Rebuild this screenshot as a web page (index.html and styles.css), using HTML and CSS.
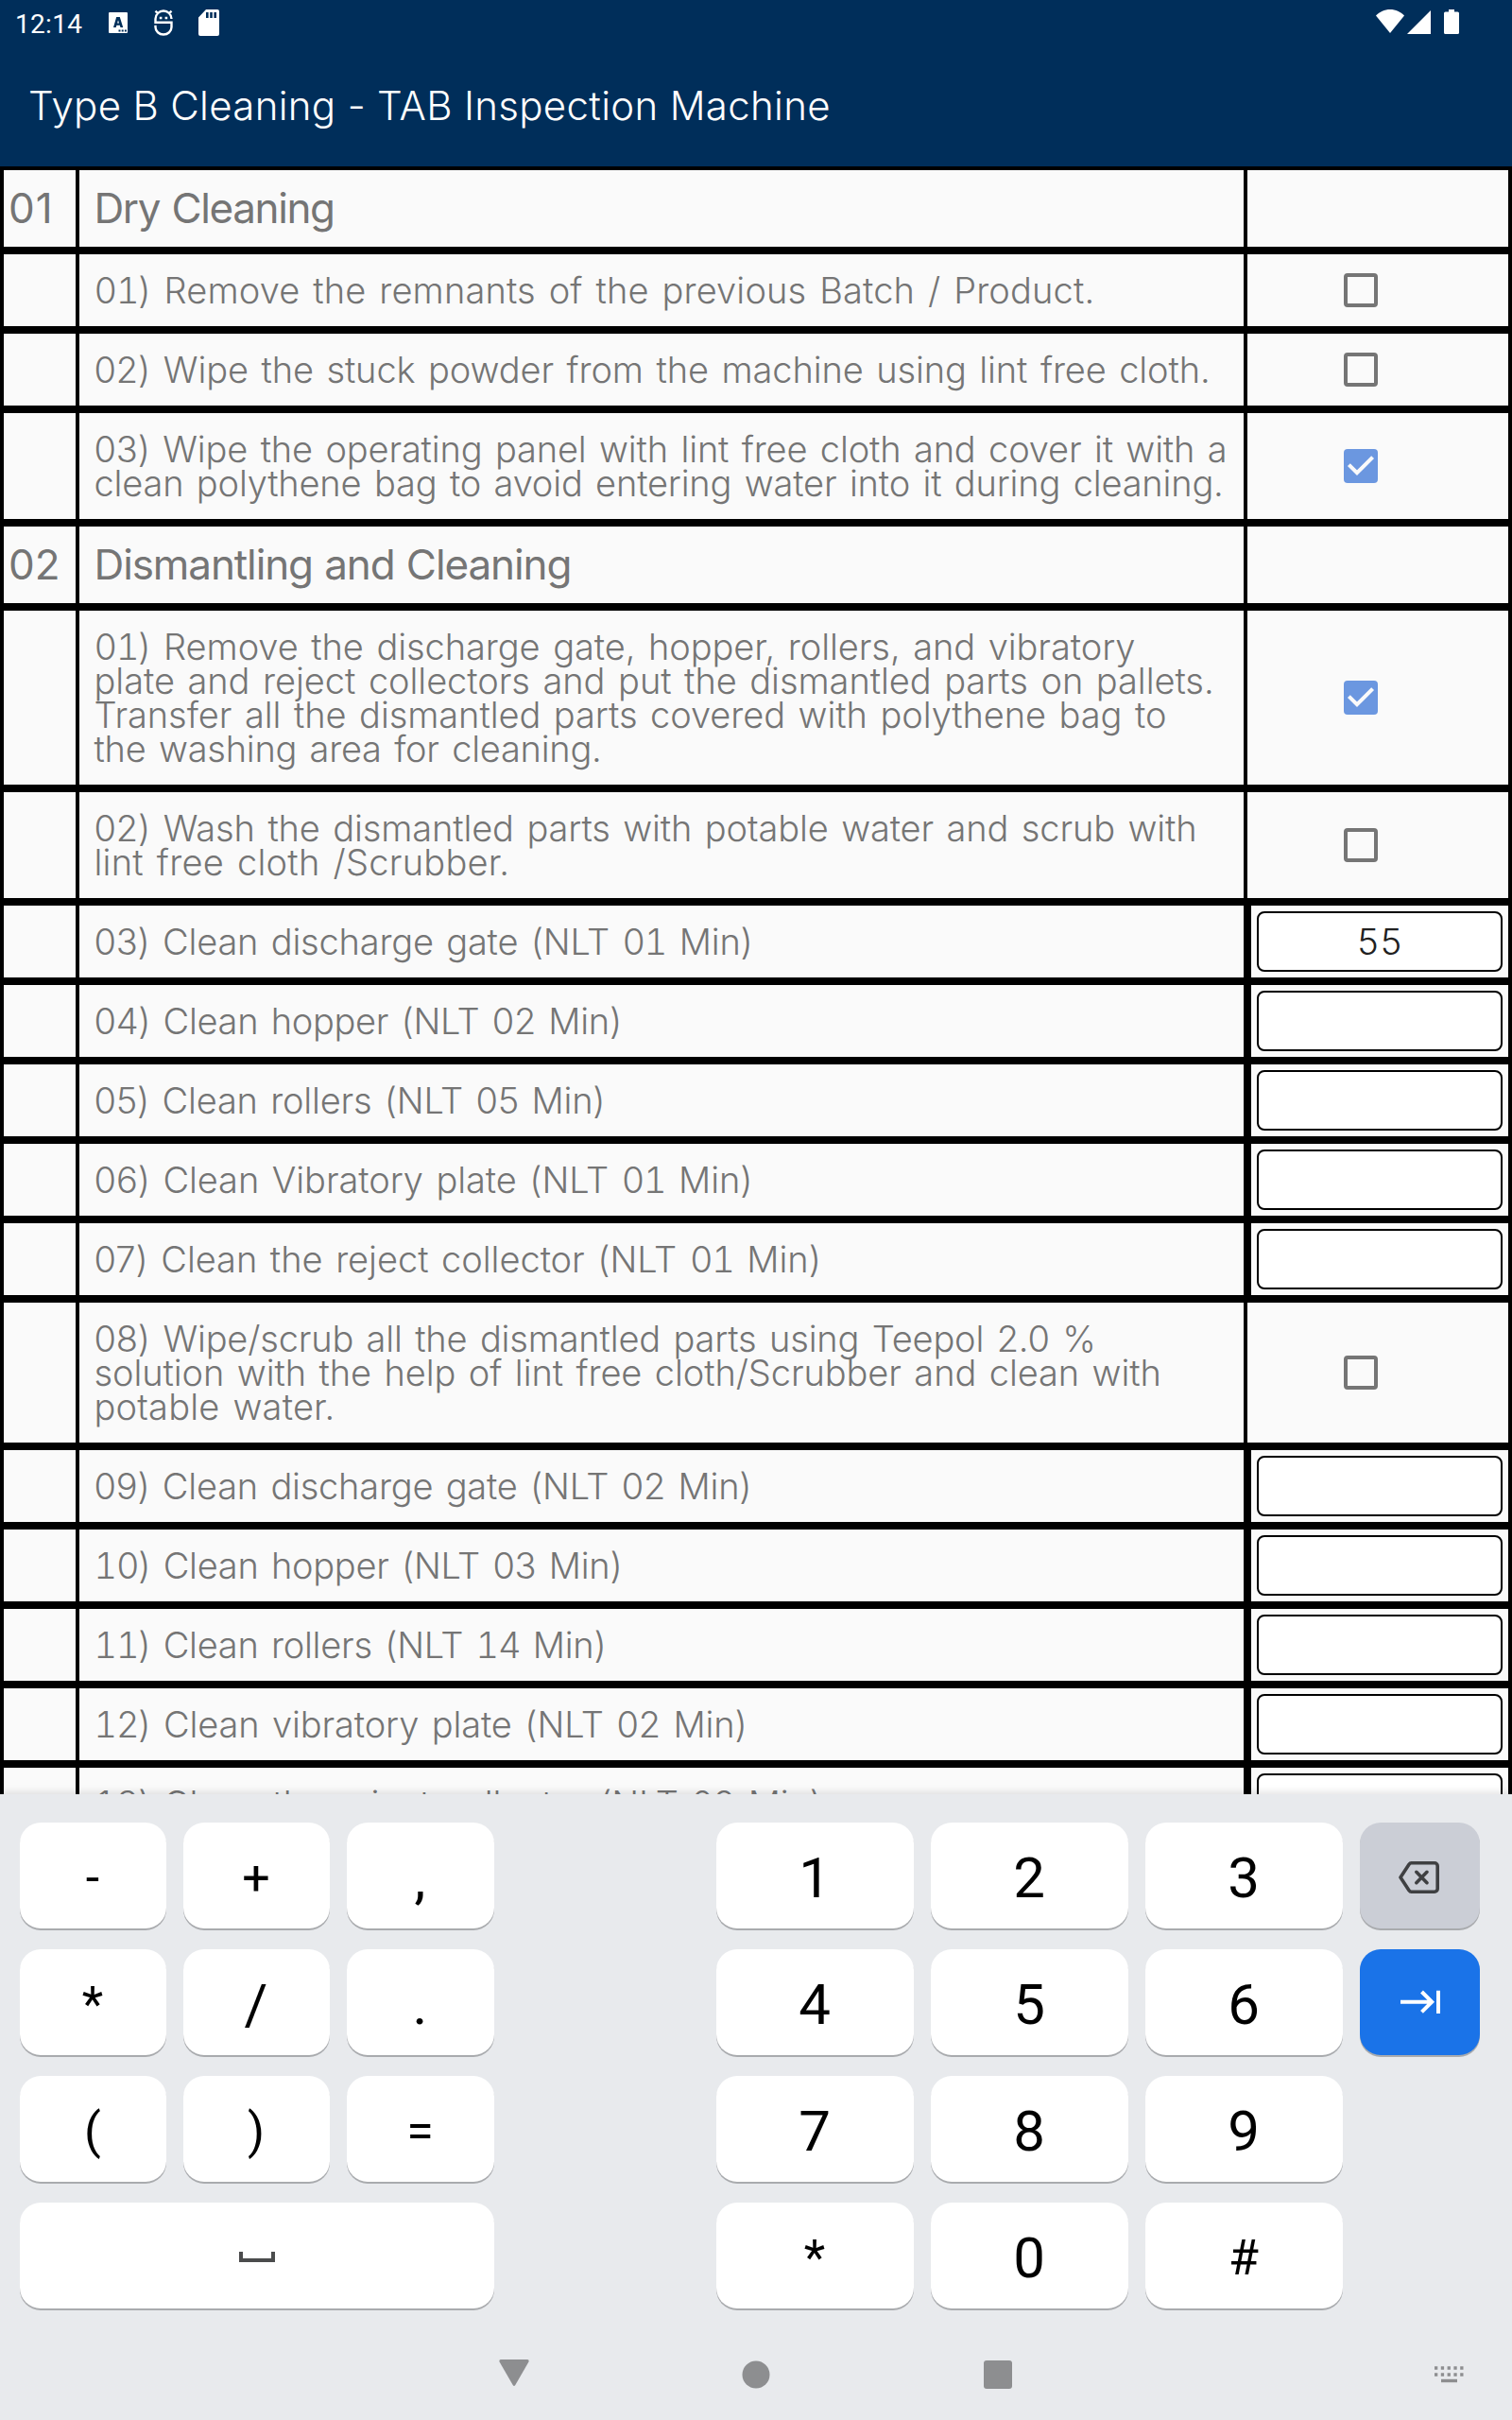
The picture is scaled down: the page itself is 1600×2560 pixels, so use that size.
FILE: index.html
```
<!DOCTYPE html>
<html lang="en">
<head>
<meta charset="utf-8">
<title>Type B Cleaning - TAB Inspection Machine</title>
<link rel="stylesheet" href="styles.css">
</head>
<body>
<div class="screen">
  <header class="top">
    <div class="status">
      <span class="clock">12:14</span>
      <svg class="ico-lang" width="20" height="22" viewBox="0 0 20 22"><path fill="#fff" fill-rule="evenodd" d="M1 0h18a1 1 0 0 1 1 1v20a1 1 0 0 1-1 1H1a1 1 0 0 1-1-1V1a1 1 0 0 1 1-1zM8.200 5 5 16h2.700l.7-2.200h3.400l.7 2.200h2.700L11.800 5zM9.100 11.600 10 8.200l1 3.400zM10.500 18.500v2h2v-2zM13.700 18.500v2h2v-2zM16.900 18.500v2h2v-2z"/></svg>
      <svg class="ico-bug" width="20" height="28" viewBox="0 0 20 28" fill="none" stroke="#fff" stroke-width="2.400"><path d="M1.500 14.500V10a8.300 8.300 0 0 1 17 0M1.500 1.700l2.800 2.800M18.500 1.700 15.700 4.500M.3 13.800h18.200v5a8.500 7.700 0 0 1-17 0v-2"/><path stroke-width="2.600" d="M5.800 9h2.600M11.600 9h2.600"/></svg>
      <svg class="ico-sd" width="22" height="28" viewBox="0 0 22 28"><path fill="#fff" fill-rule="evenodd" d="M8 0h12a2 2 0 0 1 2 2v24a2 2 0 0 1-2 2H2a2 2 0 0 1-2-2V8.500zM8 3v6h2.600V3zM12.200 3v6h2.600V3zM16.400 3v6H19V3z"/></svg>
      <svg class="ico-wifi" width="30" height="25" viewBox="0 0 30 25"><path fill="#fff" d="M15 25 0 6.500C4 2.500 9 0 15 0s11 2.500 15 6.500z"/></svg>
      <svg class="ico-cell" width="25" height="25" viewBox="0 0 25 25"><path fill="#fff" d="M0 25 25 0v25z"/></svg>
      <svg class="ico-batt" width="16" height="26" viewBox="0 0 16 26"><path fill="#fff" d="M5 0h6v2.500h3.500A1.500 1.500 0 0 1 16 4v20.500a1.500 1.500 0 0 1-1.500 1.500h-13A1.500 1.500 0 0 1 0 24.500V4a1.500 1.500 0 0 1 1.500-1.500H5z"/></svg>
    </div>
    <h1 class="title">Type B Cleaning - TAB Inspection Machine</h1>
  </header>

  <main class="sheet">
    <div class="row section"><div class="num first">01</div><div class="text dry">Dry Cleaning</div><div class="mark"></div></div>
    <div class="row"><div class="num"></div><div class="text"><span style="letter-spacing:.15px"><b>01</b>) Remove the remnants of the previous Batch / Product.</span></div><div class="mark"><i class="box"></i></div></div>
    <div class="row"><div class="num"></div><div class="text"><span style="letter-spacing:-.11px">02) Wipe the stuck powder from the machine using lint free cloth.</span></div><div class="mark"><i class="box"></i></div></div>
    <div class="row"><div class="num"></div><div class="text"><span style="letter-spacing:-.16px">03) Wipe the operating panel with lint free cloth and cover it with a</span><span style="letter-spacing:-.18px">clean polythene bag to avoid entering water into it during cleaning.</span></div><div class="mark"><svg class="box on" viewBox="0 0 36 36"><path d="M5.400 16.600 14 25.200 30.600 8.600"/></svg></div></div>
    <div class="row section"><div class="num">02</div><div class="text dismantle">Dismantling and Cleaning</div><div class="mark"></div></div>
    <div class="row"><div class="num"></div><div class="text"><span style="letter-spacing:-.07px"><b>01</b>) Remove the discharge gate, hopper, rollers, and vibratory</span><span style="letter-spacing:-.06px">plate and reject collectors and put the dismantled parts on pallets.</span><span style="letter-spacing:-.07px">Transfer all the dismantled parts covered with polythene bag to</span><span style="letter-spacing:-.25px">the washing area for cleaning.</span></div><div class="mark"><svg class="box on" viewBox="0 0 36 36"><path d="M5.400 16.600 14 25.200 30.600 8.600"/></svg></div></div>
    <div class="row"><div class="num"></div><div class="text"><span style="letter-spacing:-.13px">02) Wash the dismantled parts with potable water and scrub with</span><span style="letter-spacing:.25px">lint free cloth /Scrubber.</span></div><div class="mark"><i class="box"></i></div></div>
    <div class="row"><div class="num"></div><div class="text"><span style="letter-spacing:-.2px">03) Clean discharge gate (NLT <b>01</b> Min)</span></div><div class="mark entry"><div class="field"><b>55</b></div></div></div>
    <div class="row"><div class="num"></div><div class="text"><span style="letter-spacing:-.3px">04) Clean hopper (NLT 02 Min)</span></div><div class="mark entry"><div class="field"></div></div></div>
    <div class="row"><div class="num"></div><div class="text"><span style="letter-spacing:-.21px">05) Clean rollers (NLT 05 Min)</span></div><div class="mark entry"><div class="field"></div></div></div>
    <div class="row"><div class="num"></div><div class="text"><span style="letter-spacing:-.08px">06) Clean Vibratory plate (NLT <b>01</b> Min)</span></div><div class="mark entry"><div class="field"></div></div></div>
    <div class="row"><div class="num"></div><div class="text"><span style="letter-spacing:-.04px">07) Clean the reject collector (NLT <b>01</b> Min)</span></div><div class="mark entry"><div class="field"></div></div></div>
    <div class="row"><div class="num"></div><div class="text"><span style="letter-spacing:-.18px">08) Wipe/scrub all the dismantled parts using Teepol 2.0 %</span><span style="letter-spacing:-.1px">solution with the help of lint free cloth/Scrubber and clean with</span><span style="letter-spacing:.2px">potable water.</span></div><div class="mark"><i class="box"></i></div></div>
    <div class="row"><div class="num"></div><div class="text"><span style="letter-spacing:-.22px">09) Clean discharge gate (NLT 02 Min)</span></div><div class="mark entry"><div class="field"></div></div></div>
    <div class="row"><div class="num"></div><div class="text"><span style="letter-spacing:-.27px"><b>10</b>) Clean hopper (NLT 03 Min)</span></div><div class="mark entry"><div class="field"></div></div></div>
    <div class="row"><div class="num"></div><div class="text"><span style="letter-spacing:-.26px"><b>11</b>) Clean rollers (NLT <b>14</b> Min)</span></div><div class="mark entry"><div class="field"></div></div></div>
    <div class="row"><div class="num"></div><div class="text"><span style="letter-spacing:-.13px"><b>12</b>) Clean vibratory plate (NLT 02 Min)</span></div><div class="mark entry"><div class="field"></div></div></div>
    <div class="row"><div class="num"></div><div class="text"><span style="letter-spacing:-.08px"><b>13</b>) Clean the reject collector (NLT 02 Min)</span></div><div class="mark entry"><div class="field"></div></div></div>
  </main>

  <section class="keyboard">
    <div class="keys symbols">
      <div class="key">-</div><div class="key">+</div><div class="key big">,</div>
      <div class="key">*</div><div class="key big">/</div><div class="key big">.</div>
      <div class="key">(</div><div class="key">)</div><div class="key">=</div>
      <div class="key space"><svg width="38" height="11" viewBox="0 0 38 11"><path d="M2 0v9h34V0" fill="none" stroke="#4b4c4d" stroke-width="4"/></svg></div>
    </div>
    <div class="keys digits">
      <div class="key big">1</div><div class="key big">2</div><div class="key big">3</div>
      <div class="key big">4</div><div class="key big">5</div><div class="key big">6</div>
      <div class="key big">7</div><div class="key big">8</div><div class="key big">9</div>
      <div class="key">*</div><div class="key big">0</div><div class="key">#</div>
    </div>
    <div class="keys actions">
      <div class="key delete"><svg width="44" height="34" viewBox="0 0 44 34" fill="none" stroke="#3f4042" stroke-width="3.600" stroke-linejoin="round"><path d="M13.500 1.800H38a3.200 3.200 0 0 1 3.200 3.200v24a3.200 3.200 0 0 1-3.200 3.200H13.500Q12 32.200 11 30.700L2 17l9-13.700Q12 1.800 13.500 1.800z"/><path stroke-linecap="round" d="M18.800 11.300 30 22.700M30 11.300 18.800 22.700"/></svg></div>
      <div class="key next"><svg width="43" height="26" viewBox="0 0 43 26" fill="none" stroke="#fff" stroke-width="4"><path d="M1 12.700h33M23.500 2l10.700 10.700L23.500 23.400M41 .7v24.200"/></svg></div>
    </div>
  </section>

  <nav class="nav">
    <svg class="back" width="32" height="32" viewBox="0 0 32 32"><path fill="#8d8e90" d="M2.500 0h27q3 0 1.800 2.800L17.300 27q-1.300 2-2.600 0L.700 2.800Q-.500 0 2.500 0z"/></svg>
    <svg class="home" width="30" height="30" viewBox="0 0 30 30"><circle cx="15" cy="15" r="14.500" fill="#8d8e90"/></svg>
    <i class="recent"></i>
    <svg class="ime" width="31" height="18" viewBox="0 0 31 18" fill="none" stroke="#8d8e90"><path stroke-width="3.600" d="M0 2h31M0 9h31" stroke-dasharray="3.300 3.500"/><path stroke-width="3.400" d="M7 15.500h17"/></svg>
  </nav>
</div>
</body>
</html>
```
FILE: styles.css
```
* { box-sizing: border-box; }

body {
  margin: 0;
  font-family: Inter, sans-serif;
}

/* equal-width figures, so that "1" keeps the column */
b {
  font-weight: inherit;
  font-variant-numeric: tabular-nums;
}
.text b { letter-spacing: -1.2px; }

.screen {
  display: flex;
  flex-direction: column;
  width: 1600px;
  height: 2560px;
  overflow: hidden;
  background: #e8eaed;
}

/* status bar and title */
.top {
  flex: none;
  height: 176px;
  background: #002e5a;
  color: #fff;
}

.status {
  display: flex;
  align-items: flex-start;
  height: 50px;
  padding: 10px 56px 0 16px;
}

.status svg { flex: none; }
.clock {
  width: 99px;
  font: 400 28px/32px Roboto, sans-serif;
  letter-spacing: .3px;
}
.ico-lang { margin-top: 3px; }
.ico-bug { margin-left: 28px; }
.ico-sd { margin-left: 27px; }
.ico-wifi { margin: 0 3px 0 auto; }
.ico-cell { margin: 1px 14px 0 0; }

.title {
  margin: 0;
  padding: 37px 0 0 30px;
  font-size: 42px;
  font-weight: 300;
  line-height: 50px;
  letter-spacing: .32px;
}

/* checklist table */
.sheet {
  flex: none;
  display: flex;
  flex-direction: column;
  gap: 8px;
  height: 1722px;
  padding: 4px;
  overflow: hidden;
  background: #000;
  color: #757575;
}

.row {
  flex: none;
  display: grid;
  grid-template-columns: 76px 1232px 276px;
  gap: 4px;
}

.num, .text, .mark { background: #fafafa; }

.text {
  padding: 20px 0 20px 15.5px;
  font-size: 38px;
  font-weight: 300;
  line-height: 36px;
  word-spacing: 3px;
  white-space: nowrap;
}

.text span { display: block; }

.section { height: 81px; }
.section .num, .section .text {
  padding-top: 0;
  padding-bottom: 0;
  font-size: 44px;
  font-weight: 400;
  line-height: 80px;
}
.section .num { padding-left: 5px; }
.section .first { letter-spacing: 1px; }
.section .dry { letter-spacing: -1.4px; word-spacing: 1.6px; }
.section .dismantle { letter-spacing: -1.1px; word-spacing: 1px; }

.mark {
  display: flex;
  align-items: center;
  padding-left: 102px;
}

.box {
  width: 36px;
  height: 36px;
  border: 4px solid #757575;
  border-radius: 4px;
}
.box.on { border: 0; background: #6b97e0; }
.box.on path {
  fill: none;
  stroke: #fafafa;
  stroke-width: 4;
}

.entry {
  margin-left: 4px;
  padding: 6px;
}

.field {
  flex: 1;
  height: 64px;
  border: 2px solid #000;
  border-radius: 8px;
  background: #fff;
  color: #212121;
  font-size: 38px;
  font-weight: 300;
  line-height: 60px;
  text-align: center;
}

/* numeric keyboard */
.keyboard {
  flex: none;
  display: flex;
  height: 562px;
  padding: 30px 34px 0 21px;
  background: #e8eaed;
  box-shadow: 0 -2px 8px rgba(0, 0, 0, .12);
}

.keys {
  display: grid;
  grid-auto-rows: 112px;
  align-content: start;
  gap: 22px 18px;
}
.symbols { grid-template-columns: 155px 155px 156px; }
.digits { grid-template-columns: repeat(3, 209px); margin-left: 235px; }
.actions { grid-template-columns: 127px; margin-left: 18px; }

.key {
  display: flex;
  align-items: center;
  justify-content: center;
  padding: 5px 1px 0 0;
  border-radius: 22px;
  background: #fff;
  box-shadow: 0 2px 0 #a9abae;
  color: #000;
  font: 400 52px/60px Roboto, sans-serif;
}
.key.big { font-size: 60px; }
.key.space { grid-column: 1 / -1; padding: 2px 0 0; }
.key.delete { padding: 4px 2px 0 0; background: #cbced6; }
.key.next { padding: 0 1px 0 0; background: #1a73e8; }

/* system navigation */
.nav {
  position: relative;
  display: flex;
  align-items: center;
  height: 100px;
  padding: 4px 51px 0 528px;
  background: #e8eaed;
}
.home { margin-left: 225px; }
.recent {
  width: 30px;
  height: 30px;
  margin-left: 226px;
  border-radius: 3px;
  background: #8d8e90;
}
.ime { margin-left: auto; }
```
